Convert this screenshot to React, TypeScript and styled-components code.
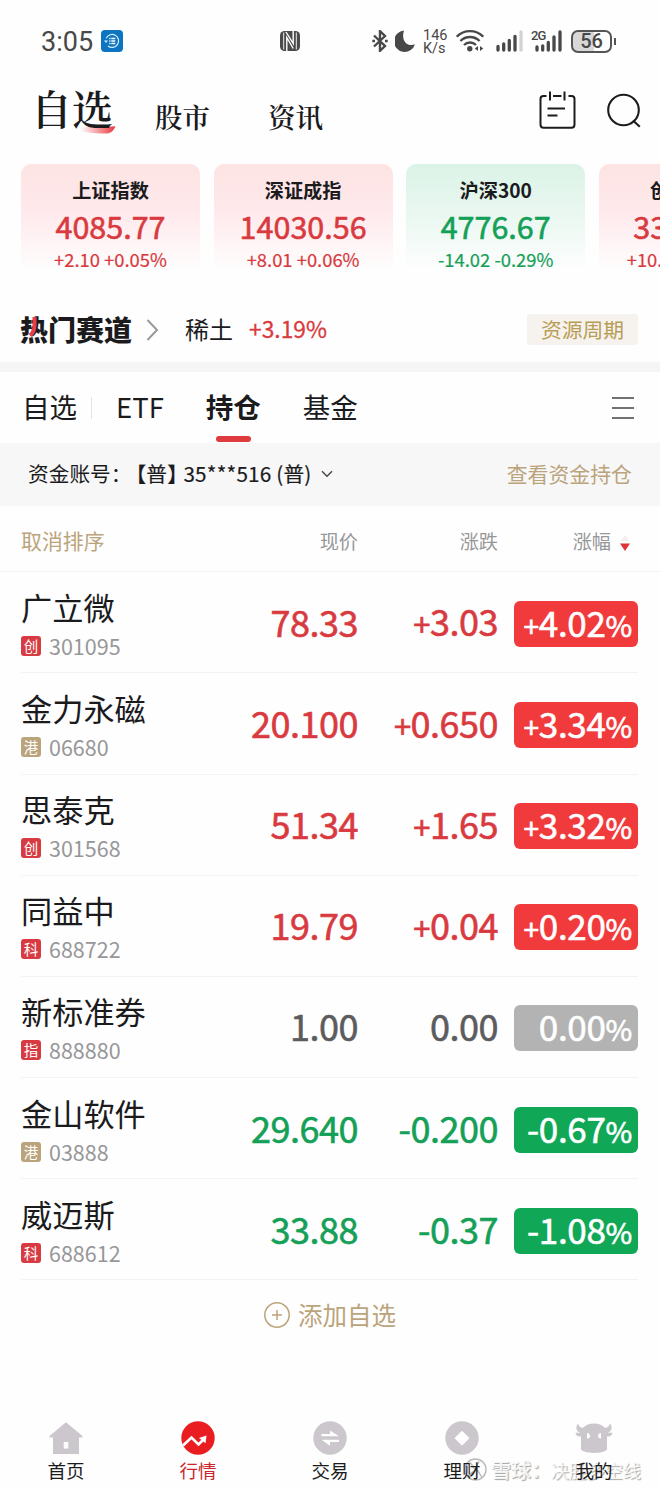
import { FC, ReactNode } from 'react';
import styled, { createGlobalStyle } from 'styled-components';

type Trend = 'up' | 'down' | 'flat';

const RED = '#d93a40';
const GREEN = '#15a058';
const GOLD = '#bba47c';

const textColor: Record<Trend, string> = {
  up: RED,
  down: GREEN,
  flat: '#5c5c5e',
};

const badgeColor: Record<Trend, string> = {
  up: '#f03a3c',
  down: '#10a857',
  flat: '#b3b3b3',
};

const indexes: {
  name: string;
  value: string;
  change: string;
  trend: Trend;
}[] = [
  { name: '上证指数', value: '4085.77', change: '+2.10 +0.05%', trend: 'up' },
  { name: '深证成指', value: '14030.56', change: '+8.01 +0.06%', trend: 'up' },
  { name: '沪深300', value: '4776.67', change: '-14.02 -0.29%', trend: 'down' },
  { name: '创业板指', value: '3318.90', change: '+10.23 +0.31%', trend: 'up' },
];

const stocks: {
  name: string;
  mark: string;
  code: string;
  price: string;
  change: string;
  percent: string;
  trend: Trend;
}[] = [
  { name: '广立微', mark: '创', code: '301095', price: '78.33', change: '+3.03', percent: '+4.02', trend: 'up' },
  { name: '金力永磁', mark: '港', code: '06680', price: '20.100', change: '+0.650', percent: '+3.34', trend: 'up' },
  { name: '思泰克', mark: '创', code: '301568', price: '51.34', change: '+1.65', percent: '+3.32', trend: 'up' },
  { name: '同益中', mark: '科', code: '688722', price: '19.79', change: '+0.04', percent: '+0.20', trend: 'up' },
  { name: '新标准券', mark: '指', code: '888880', price: '1.00', change: '0.00', percent: '0.00', trend: 'flat' },
  { name: '金山软件', mark: '港', code: '03888', price: '29.640', change: '-0.200', percent: '-0.67', trend: 'down' },
  { name: '威迈斯', mark: '科', code: '688612', price: '33.88', change: '-0.37', percent: '-1.08', trend: 'down' },
];

const Signed: FC<{ text: string }> = ({ text }) =>
  text[0] === '+' ? (
    <>
      <Plus>+</Plus>
      {text.slice(1)}
    </>
  ) : (
    <>{text}</>
  );

const StatusBar = () => (
  <Status>
    <Clock>3:05</Clock>
    <svg width="22" height="22" viewBox="0 0 22 22">
      <rect width="22" height="22" rx="4" fill="#0d74c0" />
      <path d="M5.2 8.2A6.5 6.5 0 1 1 7 16" fill="none" stroke="#d8efff" strokeWidth="1.2" />
      <path d="M3 10.5h4L5 13z" fill="#d8efff" />
      <path d="M8.3 8.5h1.2M10.3 8.5h4M8.3 11h1.2M10.3 11h4M8.3 13.5h1.2M10.3 13.5h4" stroke="#fff" strokeWidth="1.4" />
    </svg>
    <NfcIcon width="20" height="20" viewBox="0 0 20 20">
      <rect x="0" y="0" width="20" height="20" rx="4.5" fill="#4b4b4b" />
      <path d="M3.700 1.500v17M16.300 1.500v17" stroke="#fff" strokeWidth=".9" />
      <path d="M6.800 20V6.500L13.200 17.500M13.200 0v12.500L6 1" fill="none" stroke="#fff" strokeWidth="1.400" />
    </NfcIcon>
    <StatusRight>
      <svg width="16" height="22" viewBox="0 0 16 22">
        <path d="M2 5.500L13 16L8 20.800V1.200L13 6L2 16.500" fill="none" stroke="#484848" strokeWidth="2.400" />
        <path d="M.3 11h2.700M13 11h2.700" stroke="#484848" strokeWidth="2.600" />
      </svg>
      <svg width="20" height="22" viewBox="0 0 20 22">
        <path d="M9 .6A10.7 10.7 0 1 0 20 14.300C13 17.500 5.500 11 9 .6z" fill="#484848" />
      </svg>
      <Speed>
        <span>146</span>
        <span>K/s</span>
      </Speed>
      <svg width="28" height="22" viewBox="0 0 28 22">
        <g fill="none" stroke="#484848" strokeWidth="2.300">
          <path d="M.8 6.700a18.500 18.500 0 0 1 26.400 0" />
          <path d="M4.400 11a13.500 13.500 0 0 1 19.200 0" />
          <path d="M8 15a8.500 8.500 0 0 1 12 0" />
        </g>
        <circle cx="13.800" cy="18.700" r="2.700" fill="#484848" />
        <path d="M22 16v5l-3.200-2.500zM24 16v5l3.200-2.500z" fill="#484848" />
      </svg>
      <SignalIcon width="27" height="22" viewBox="0 0 27 22">
        <path d="M2 16.500v3.500M7.700 14v6M13.300 10.500v9.500M19 6.500v13.500" stroke="#484848" strokeWidth="3.300" strokeLinecap="round" />
        <path d="M25 2v18" stroke="#d2d2d2" strokeWidth="3.300" strokeLinecap="round" />
      </SignalIcon>
      <MobileSignal>
        <Net>2G</Net>
        <svg width="27" height="22" viewBox="0 0 27 22">
          <path d="M2 17v3M7.700 16v4M13.300 12.500v7.500M19 7v13M25 2v18" stroke="#484848" strokeWidth="3.300" strokeLinecap="round" />
        </svg>
      </MobileSignal>
      <Battery>56</Battery>
      <BatteryTip />
    </StatusRight>
  </Status>
);

const navItems: { label: string; icon: ReactNode; active?: boolean }[] = [
  {
    label: '首页',
    icon: (
      <path
        fillRule="evenodd"
        d="M17 1.300L33.500 15v1.500H30V33H4V16.500H.5V15zM14.700 21v6.500h4.600V21z"
        fill="#cbc7cd"
      />
    ),
  },
  {
    label: '行情',
    active: true,
    icon: (
      <>
        <circle cx="17" cy="17" r="16.700" fill="#e91d21" />
        <path d="M2 24.500L10.500 16.500L17.500 23.500L23 18" fill="none" stroke="#fff" strokeWidth="2.600" />
        <path d="M18 17l7.500-2.500-1 7.800z" fill="#fff" />
      </>
    ),
  },
  {
    label: '交易',
    icon: (
      <>
        <circle cx="17" cy="17" r="16.700" fill="#cbc7cd" />
        <path d="M8.500 13h8.500V9.500L26 15.200H8.500zM26 18.800H8.500L17 24.800V21H26z" fill="#fff" />
      </>
    ),
  },
  {
    label: '理财',
    icon: (
      <>
        <circle cx="17" cy="17" r="16.700" fill="#cbc7cd" />
        <path d="M17 10.200l7 7-7 7-7-7z" fill="#fff" stroke="#fff" />
      </>
    ),
  },
  {
    label: '我的',
    icon: (
      <>
        <path
          d="M1 2.300C-1.500 6-1.300 10 3.200 11.700H-1.500C-1 14.800 1 15.500 4 15.500V28.500C7 33 27 33 30 28.500V15.500C33 15.500 35 14.800 35.500 11.700H30.800C35.300 10 35.500 6 33 2.300C32.500 5 31 6.800 28 6.800C23 1 11 1 6 6.800C3 6.800 1.500 5 1 2.300z"
          fill="#cbc7cd"
        />
        <path d="M10 12c2 0 3 1.500 3 3s-1 2.500-3 2.500zM24 12c-2 0-3 1.500-3 3s1 2.500 3 2.500z" fill="#fff" />
      </>
    ),
  },
];

export default function App() {
  return (
    <Screen>
      <GlobalStyle />
      <StatusBar />
      <Header>
        <MainTitle>
          自选
          <Brush width="36" height="8" viewBox="0 0 36 8">
            <defs>
              <linearGradient id="brush">
                <stop offset="0" stopColor="#f0474c" stopOpacity="0" />
                <stop offset="1" stopColor="#e8353c" />
              </linearGradient>
            </defs>
            <path d="M0 1.500C12 1 26 .8 35.500 .3C34 4 31 7.500 27 7.500C18 7.500 8 7 0 5z" fill="url(#brush)" />
          </Brush>
        </MainTitle>
        <SubTitle>股市</SubTitle>
        <SubTitle>资讯</SubTitle>
        <HeaderIcons>
          <svg width="37" height="38" viewBox="0 0 37 38" fill="none" stroke="#1c1c1e" strokeWidth="2">
            <path d="M7.500 5H4.500Q1.500 5 1.500 8V33.500Q1.500 36.700 4.500 36.700H32.500Q35.500 36.700 35.500 33.500V8Q35.500 5 32.500 5H29.500M14 5h8.500M11 .5v9M25.500 .5v9M8.500 17.500h17.500M8.500 24.500h10" />
          </svg>
          <svg width="34" height="36" viewBox="0 0 34 36" fill="none" stroke="#1c1c1e" strokeWidth="2.100">
            <circle cx="16.500" cy="18" r="15.300" />
            <path d="M26 28.500l6.800 6.300" />
          </svg>
        </HeaderIcons>
      </Header>

      <IndexStrip>
        {indexes.map((item) => (
          <IndexCard key={item.name} $trend={item.trend}>
            <h2>{item.name}</h2>
            <strong>{item.value}</strong>
            <p>{item.change}</p>
          </IndexCard>
        ))}
      </IndexStrip>

      <HotRow>
        <HotTitle>
          热门赛道
          <HotStroke width="10" height="20" viewBox="0 0 10 20">
            <path d="M5.500 0V8C5.500 13 4 16 1 18.500" fill="none" stroke="#ea3f45" strokeWidth="4" />
          </HotStroke>
        </HotTitle>
        <svg width="13" height="22" viewBox="0 0 13 22">
          <path d="M1.500 1l9.500 10-9.500 10" fill="none" stroke="#9a9a9c" strokeWidth="2" />
        </svg>
        <HotName>稀土</HotName>
        <HotChange>+3.19%</HotChange>
        <HotTag>资源周期</HotTag>
      </HotRow>

      <Band />

      <Tabs>
        <Tab>自选</Tab>
        <TabDivider />
        <Tab>ETF</Tab>
        <Tab $active>持仓</Tab>
        <Tab>基金</Tab>
        <svg width="22" height="22" viewBox="0 0 22 22">
          <path d="M0 1h22M0 11h22M0 21h22" stroke="#444" strokeWidth="1.500" />
        </svg>
      </Tabs>

      <Account>
        <span>资金账号：</span>
        <AccountNumber>
          【普<Bracket>】</Bracket>35***516 (普)
        </AccountNumber>
        <svg width="12" height="8" viewBox="0 0 12 8">
          <path d="M1 1.200l5 5 5-5" fill="none" stroke="#444" strokeWidth="1.400" />
        </svg>
        <AccountLink>查看资金持仓</AccountLink>
      </Account>

      <TableHead>
        <Reset>取消排序</Reset>
        <HeadCell>现价</HeadCell>
        <HeadCell>涨跌</HeadCell>
        <SortCell>
          涨幅
          <svg width="10" height="18" viewBox="0 0 10 18">
            <path d="M5 1l4.500 6h-9z" fill="#f1eff0" />
            <path d="M0 9.500h10L5 17z" fill="#dc3439" />
          </svg>
        </SortCell>
      </TableHead>

      <List>
        {stocks.map((stock) => (
          <StockRow key={stock.code}>
            <StockInfo>
              <StockName>{stock.name}</StockName>
              <StockCode>
                <Mark $gold={stock.mark === '港'}>{stock.mark}</Mark>
                {stock.code}
              </StockCode>
            </StockInfo>
            <Figure $trend={stock.trend}>{stock.price}</Figure>
            <Figure $trend={stock.trend}>
              <Signed text={stock.change} />
            </Figure>
            <Badge $trend={stock.trend}>
              <Signed text={stock.percent} />
              <small>%</small>
            </Badge>
          </StockRow>
        ))}
      </List>

      <AddButton>
        <svg width="26" height="26" viewBox="0 0 26 26" fill="none" stroke={GOLD} strokeWidth="1.500">
          <circle cx="13" cy="13" r="12.200" />
          <path d="M8 13h10M13 8v10" />
        </svg>
        添加自选
      </AddButton>

      <Nav>
        {navItems.map((item) => (
          <NavItem key={item.label} $active={item.active}>
            <svg width="34" height="34" viewBox="0 0 34 34" overflow="visible">
              {item.icon}
            </svg>
            {item.label}
          </NavItem>
        ))}
      </Nav>

      <Watermark>
        <svg width="23" height="23" viewBox="0 0 23 23" fill="none" stroke="#b9b9b9" strokeWidth="1.400">
          <circle cx="11.500" cy="11.500" r="10.500" />
          <path d="M6 4.500C9 7 8 10 12 11.500S15 17 18 19M15 3.500C12 8 13 12 9 14S6 18 6 19" />
        </svg>
        <b>雪球：</b>
        <span>决胜多空线</span>
      </Watermark>
    </Screen>
  );
}

const GlobalStyle = createGlobalStyle`
  * {
    box-sizing: border-box;
    margin: 0;
    padding: 0;
  }

  body {
    background: #fefefe;
    font-family: 'Noto Sans CJK SC', 'Noto Sans', sans-serif;
    color: #1b1b1d;
  }

  svg {
    flex-shrink: 0;
    display: block;
  }
`;

const Screen = styled.div`
  position: relative;
  isolation: isolate;
  display: flex;
  flex-direction: column;
  width: 660px;
  height: 1490px;
  overflow: hidden;
  background: #fefefe;
  line-height: 1;
  white-space: nowrap;
`;

const Status = styled.div`
  display: flex;
  align-items: center;
  height: 66px;
  padding: 16px 44px 0 41px;
  font-family: Roboto, sans-serif;
  color: #484848;
`;

const Clock = styled.span`
  width: 60px;
  padding-top: 2px;
  font-size: 27px;
`;

const NfcIcon = styled.svg`
  margin-left: 157px;
`;

const StatusRight = styled.div`
  display: flex;
  align-items: center;
  margin-left: auto;
  gap: 7px;
`;

const Speed = styled.div`
  display: flex;
  flex-direction: column;
  width: 26px;
  margin-left: 1px;
  padding-top: 1px;
  font-size: 14.5px;
  line-height: 13px;
`;

const SignalIcon = styled.svg`
  margin-left: 5px;
`;

const MobileSignal = styled.div`
  position: relative;
  margin: 0 2px 0 5px;
`;

const Net = styled.span`
  position: absolute;
  left: -4px;
  top: -1px;
  font-size: 13px;
  font-weight: 500;
  letter-spacing: -1px;
`;

const Battery = styled.div`
  display: flex;
  align-items: center;
  justify-content: center;
  width: 41px;
  height: 23px;
  border: 2px solid #555;
  border-radius: 7px;
  background: linear-gradient(90deg, #d8d8d8 56%, #fefefe 56%);
  font-size: 20px;
  font-weight: 500;
`;

const BatteryTip = styled.i`
  width: 2px;
  height: 7px;
  margin-left: -5px;
  background: #555;
`;

const Header = styled.header`
  display: flex;
  align-items: center;
  height: 98px;
  padding: 0 19px 10px 31px;
  font-family: 'Noto Serif CJK SC', 'Noto Sans CJK SC', serif;
`;

const MainTitle = styled.h1`
  position: relative;
  width: 124px;
  margin-top: -5px;
  font-size: 41px;
  font-weight: 600;
`;

const Brush = styled.svg`
  position: absolute;
  left: 49px;
  top: 39px;
  z-index: -1;
`;

const SubTitle = styled.span`
  width: 113px;
  padding-top: 13px;
  font-size: 27.5px;
  font-weight: 600;
`;

const HeaderIcons = styled.div`
  display: flex;
  align-items: center;
  gap: 31px;
  margin-left: auto;
`;

const IndexStrip = styled.section`
  display: flex;
  gap: 13.6px;
  height: 107px;
  padding-left: 21px;
`;

const IndexCard = styled.article<{ $trend: Trend }>`
  display: flex;
  flex: 0 0 179px;
  flex-direction: column;
  align-items: center;
  padding-top: 16px;
  border-radius: 10px;
  background: ${({ $trend }) =>
    $trend === 'down'
      ? 'linear-gradient(#dbf3e7, #e9f7f0 45%, #fefefe)'
      : 'linear-gradient(#fde3e3, #ffe9ec 45%, #fefefe)'};
  color: ${({ $trend }) => textColor[$trend]};

  h2 {
    font-size: 19.2px;
    font-weight: 700;
    line-height: 20px;
    color: #1b1b1d;
  }

  strong {
    margin-top: 9px;
    font-size: 30.5px;
    font-weight: 400;
    line-height: 34px;
    -webkit-text-stroke: 0.6px currentColor;
  }

  p {
    margin-top: 6px;
    font-size: 18.4px;
    line-height: 20px;
    -webkit-text-stroke: 0.2px currentColor;
  }
`;

const HotRow = styled.section`
  display: flex;
  align-items: center;
  height: 91px;
  padding: 26px 22px 0 20px;
`;

const HotTitle = styled.h2`
  position: relative;
  width: 126px;
  margin-top: -2px;
  font-size: 28px;
  font-weight: 900;
`;

const HotStroke = styled.svg`
  position: absolute;
  left: 9px;
  top: 2px;
`;

const HotName = styled.span`
  width: 64px;
  margin: -2px 0 0 26px;
  font-size: 24px;
`;

const HotChange = styled.span`
  margin-top: -1px;
  font-size: 22.8px;
  color: ${RED};
  -webkit-text-stroke: 0.3px currentColor;
`;

const HotTag = styled.span`
  display: flex;
  align-items: center;
  justify-content: center;
  width: 111px;
  height: 31px;
  margin-left: auto;
  border-radius: 3px;
  background: #f6f3ee;
  font-size: 20.8px;
  color: #b99d56;
`;

const Band = styled.div`
  height: 10px;
  background: #f5f5f5;
`;

const Tabs = styled.nav`
  display: flex;
  align-items: center;
  height: 71px;
  padding: 0 26px 0 22px;

  > svg {
    margin-left: auto;
  }
`;

const Tab = styled.span<{ $active?: boolean }>`
  position: relative;
  margin: -3px 42px 0 0;
  font-size: 27.5px;
  line-height: 40px;
  font-weight: ${({ $active }) => ($active ? 700 : 400)};

  &:first-child {
    margin-right: 14px;
  }

  &::after {
    content: ${({ $active }) => ($active ? "''" : 'none')};
    position: absolute;
    left: 10px;
    bottom: -16px;
    width: 35px;
    height: 6px;
    border-radius: 3px;
    background: #df3b3f;
  }
`;

const TabDivider = styled.i`
  width: 1px;
  height: 22px;
  margin-right: 24px;
  background: #e4e4e4;
`;

const Account = styled.div`
  display: flex;
  align-items: center;
  height: 63px;
  padding: 0 28px 2px;
  background: #f7f7f7;
  font-size: 20.7px;
`;

const AccountNumber = styled.span`
  margin: 0 9px 0 -6px;
  letter-spacing: 0.2px;
  -webkit-text-stroke: 0.2px currentColor;
`;

const Bracket = styled.span`
  letter-spacing: -4.5px;
`;

const AccountLink = styled.a`
  margin-left: auto;
  font-size: 20.9px;
  color: ${GOLD};
`;

const columns = '137px 200px 140px 140px';

const TableHead = styled.div`
  display: grid;
  grid-template-columns: ${columns};
  align-items: center;
  height: 66.3px;
  padding: 4px 21px 0;
  border-bottom: 1px solid #f3f3f3;
  font-size: 19.2px;
  color: #979799;
`;

const Reset = styled.span`
  font-size: 20.9px;
  color: ${GOLD};
`;

const HeadCell = styled.span`
  padding-top: 1px;
  text-align: right;
`;

const SortCell = styled.span`
  display: flex;
  align-items: center;
  justify-content: flex-end;
  gap: 9px;
  padding: 1px 8px 0 0;

  svg {
    margin-top: 3px;
  }
`;

const List = styled.ul`
  padding: 0 22px 0 21px;
  list-style: none;
`;

const StockRow = styled.li`
  display: grid;
  grid-template-columns: ${columns};
  align-items: center;
  height: 101.15px;
  padding-top: 3px;
  border-bottom: 1px solid #f3f3f3;
`;

const StockInfo = styled.div`
  display: flex;
  flex-direction: column;
  gap: 10px;
`;

const StockName = styled.h3`
  margin-top: -2px;
  font-size: 31.2px;
  font-weight: 400;
  line-height: 36px;
`;

const StockCode = styled.div`
  display: flex;
  align-items: center;
  gap: 8px;
  height: 22px;
  font-size: 21.5px;
  line-height: 20px;
  color: #979799;
`;

const Mark = styled.i<{ $gold: boolean }>`
  display: flex;
  align-items: center;
  justify-content: center;
  width: 20px;
  height: 20px;
  border-radius: 3px;
  background: ${({ $gold }) => ($gold ? GOLD : '#d83a42')};
  font-size: 14.5px;
  font-style: normal;
  line-height: 18px;
  color: #fff;
`;

const Figure = styled.span<{ $trend: Trend }>`
  margin-top: -6px;
  text-align: right;
  font-size: 36px;
  letter-spacing: -0.5px;
  color: ${({ $trend }) => textColor[$trend]};
  -webkit-text-stroke: 0.6px currentColor;
`;

const Plus = styled.span`
  font-size: 0.86em;
`;

const Badge = styled.span<{ $trend: Trend }>`
  display: flex;
  align-items: baseline;
  justify-content: flex-end;
  justify-self: end;
  width: 124px;
  height: 46px;
  padding-right: 6px;
  border-radius: 6px;
  background: ${({ $trend }) => badgeColor[$trend]};
  font-size: 35px;
  letter-spacing: -0.3px;
  line-height: 41px;
  color: #fff;
  -webkit-text-stroke: 0.6px currentColor;

  small {
    font-size: 29px;
  }

  ${Plus} {
    font-size: 0.8em;
  }
`;

const AddButton = styled.div`
  display: flex;
  align-items: center;
  justify-content: center;
  gap: 8px;
  height: 69px;
  font-size: 24.5px;
  color: ${GOLD};
`;

const Nav = styled.nav`
  z-index: 1;
  display: grid;
  grid-template-columns: repeat(5, 132px);
  margin-top: auto;
  height: 69px;
`;

const NavItem = styled.div<{ $active?: boolean }>`
  display: flex;
  flex-direction: column;
  align-items: center;
  gap: 6px;
  font-size: 18.5px;
  color: ${({ $active }) => ($active ? '#c9252b' : '#1b1b1d')};
`;

const Watermark = styled.div`
  position: absolute;
  left: 464px;
  top: 1458px;
  display: flex;
  align-items: center;
  height: 23px;
  font-size: 18px;
  color: rgba(255, 255, 255, 0.85);
  text-shadow: 1px 1px 1px rgba(0, 0, 0, 0.35);

  b {
    margin-left: 4px;
    font-size: 20px;
  }
`;
